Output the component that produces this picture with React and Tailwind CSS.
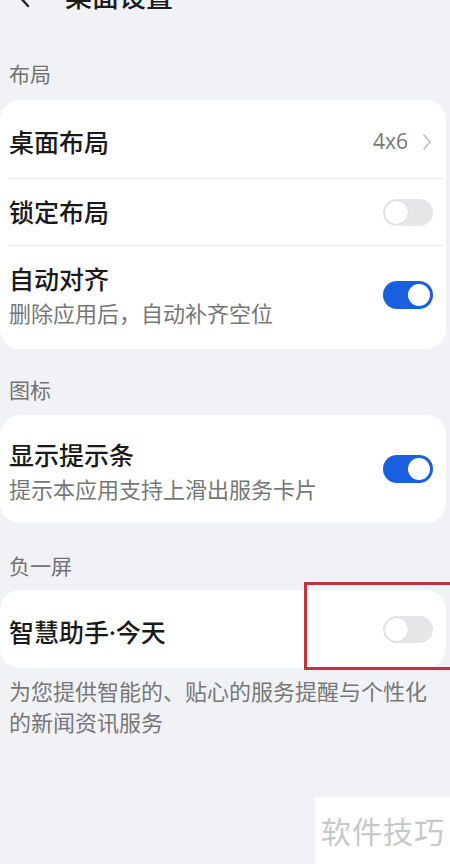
import React from 'react';

const FONT = { fontFamily: '"Noto Sans CJK SC", "Noto Sans", sans-serif' };

const Toggle = ({ on }) =>
    on ? (
        <div className="w-[50px] h-[28px] rounded-full bg-[#1a5fe0] flex items-center justify-end pr-[3px]">
            <div className="w-[22px] h-[22px] rounded-full bg-white" />
        </div>
    ) : (
        <div className="w-[50px] h-[27px] rounded-full bg-[#e6e6e8] flex items-center pl-[1px]">
            <div className="w-[25px] h-[25px] rounded-full bg-white border border-[#dcdcdc]" />
        </div>
    );

const Label = ({ children, className = '' }) => (
    <div className={`pl-[9px] text-[21px] leading-none text-[#727272] ${className}`}>{children}</div>
);

const Divider = () => <div className="ml-[8px] mr-[3px] h-px bg-[#e8e8ea]" />;

const App = () => {
    return (
        <div className="relative w-[450px] h-[864px] overflow-hidden bg-[#f1f2f6]" style={FONT}>
            {/* Header (mostly scrolled off) */}
            <div className="-mt-[24px] h-[40px] flex items-center">
                <svg width="14" height="24" viewBox="0 0 14 24" className="ml-[16px]">
                    <path d="M12 2 L3 12 L12 22" fill="none" stroke="#222" strokeWidth="2.4" strokeLinecap="round" strokeLinejoin="round" />
                </svg>
                <span className="ml-[35px] text-[27px] font-medium text-[#1a1a1a]">桌面设置</span>
            </div>

            <Label className="mt-[47px]">布局</Label>

            {/* Card 1 */}
            <div className="mt-[16px] w-[446px] rounded-[20px] bg-white">
                <div className="h-[78px] flex items-center justify-between pl-[9px] pr-[14px] pt-[6px]">
                    <span className="text-[25px] font-medium text-[#1a1a1a]">桌面布局</span>
                    <div className="flex items-center gap-[14px]">
                        <span className="text-[21px] text-[#777]" style={{ fontFamily: '"Open Sans", sans-serif' }}>4x6</span>
                        <svg width="10" height="18" viewBox="0 0 10 18">
                            <path d="M2 2 L8 9 L2 16" fill="none" stroke="#bdbdbd" strokeWidth="1.6" strokeLinecap="round" strokeLinejoin="round" />
                        </svg>
                    </div>
                </div>
                <Divider />
                <div className="h-[66px] flex items-center justify-between pl-[9px] pr-[13px]">
                    <span className="text-[25px] font-medium text-[#1a1a1a]">锁定布局</span>
                    <Toggle on={false} />
                </div>
                <Divider />
                <div className="h-[103px] flex items-center justify-between pl-[9px] pr-[13px] pb-[6px]">
                    <div className="flex flex-col">
                        <span className="text-[25px] leading-[34px] font-medium text-[#1a1a1a]">自动对齐</span>
                        <span className="text-[22px] leading-[34px] text-[#777]">删除应用后，自动补齐空位</span>
                    </div>
                    <Toggle on />
                </div>
            </div>

            <Label className="mt-[30px]">图标</Label>

            {/* Card 2 */}
            <div className="mt-[15px] w-[446px] h-[108px] rounded-[20px] bg-white flex items-center justify-between pl-[9px] pr-[13px]">
                <div className="flex flex-col pt-[4px]">
                    <span className="text-[25px] leading-[34px] font-medium text-[#1a1a1a]">显示提示条</span>
                    <span className="text-[22px] leading-[34px] text-[#777]">提示本应用支持上滑出服务卡片</span>
                </div>
                <Toggle on />
            </div>

            <Label className="mt-[32px]">负一屏</Label>

            {/* Card 3 */}
            <div className="mt-[14px] w-[446px] h-[78px] rounded-[20px] bg-white flex items-center justify-between pl-[9px] pr-[13px]">
                <span className="text-[25px] font-medium text-[#1a1a1a] pt-[6px]">
                    智慧助手<span style={{ fontFamily: '"Noto Sans", sans-serif' }}>·</span>今天
                </span>
                <Toggle on={false} />
            </div>

            <div className="mt-[7px] pl-[9px] pr-[8px] text-[22px] leading-[31px] text-[#777]">
                为您提供智能的、贴心的服务提醒与个性化的新闻资讯服务
            </div>

            {/* Red highlight box */}
            <div className="absolute left-[304px] top-[582px] w-[150px] h-[88px] border-[3px] border-[#c4323c]" />

            {/* Watermark */}
            <div className="absolute left-[315px] top-[797px] w-[135px] h-[67px] bg-white flex items-center pl-[6px]">
                <span className="text-[30px] tracking-[1px] text-[#c8c8c8]">软件技巧</span>
            </div>
        </div>
    );
};

export default App;
